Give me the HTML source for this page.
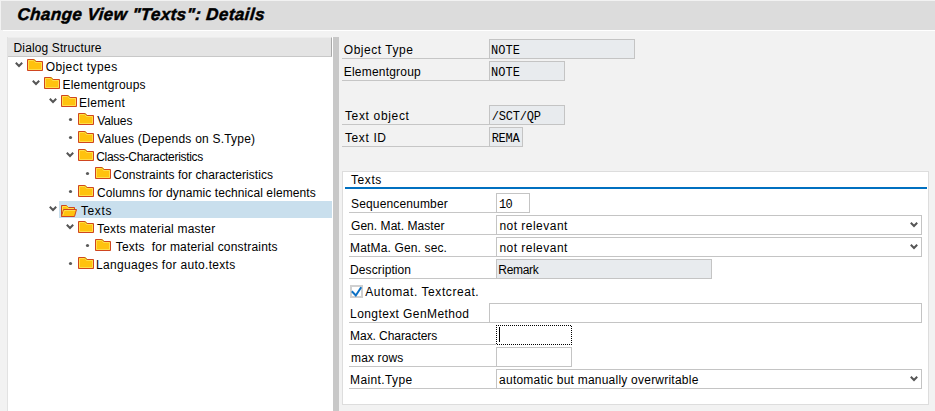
<!DOCTYPE html>
<html><head><meta charset="utf-8">
<style>
*{box-sizing:border-box}
html,body{margin:0;padding:0}
body{width:935px;height:411px;overflow:hidden;position:relative;background:#f2f2f2;font-family:"Liberation Sans",sans-serif;font-size:12px;color:#000}
.a{position:absolute}
.t{position:absolute;white-space:pre;line-height:14px;height:14px;font-size:12px}
.mono{font-family:"Liberation Mono",monospace;font-size:12px}
.title{left:1px;top:1px;width:934px;height:29px;background:#dcdcdc}
.wl{left:3px;top:30px;width:932px;height:1px;background:#fff}
.ttxt{position:absolute;left:16px;top:4px;font-size:17px;font-weight:bold;font-style:italic;white-space:pre;line-height:20px;letter-spacing:0.41px;-webkit-text-stroke:0.5px #000;transform:skewX(-5deg);transform-origin:0 16px}
.hdr{left:8px;top:37px;width:324px;height:20px;background:#e4e4e4;border-top:1px solid #ececec;border-bottom:1px solid #c8c8c8;border-right:1px solid #a9a9a9}
.tree{left:7px;top:37px;width:326px;height:374px;background:#fff;border-left:1px solid #e2e2e2}
.split{left:333px;top:37px;width:6px;height:374px;background:#c8c8c8}
.sel{left:59px;top:201px;width:273px;height:17px;background:#c9dfed}
.lbl{position:absolute;height:20px;border-bottom:1px solid #c6c6c6}
.ro{position:absolute;height:20px;background:#e8ebee;border:1px solid #c4c4c4}
.inp{position:absolute;height:20px;background:#fff;border:1px solid #c4c4c4}
.grp{left:342px;top:171px;width:587px;height:234px;background:#fff;border:1px solid #dddddd}
.blue{left:345px;top:187px;width:582px;height:2px;background:#0070c0}
</style></head>
<body>
<div class="a title"><span class="ttxt">Change View "Texts": Details</span></div>
<div class="a wl"></div>
<div class="a tree"></div>
<div class="a hdr"></div>
<div class="a split"></div>
<div class="a sel"></div>
<svg class="a" style="left:0;top:0" width="340" height="411">
<defs>
<g id="f">
<path d="M0.5 11.5 V0.5 H7 L9 2.5 H15.5 V11.5 Z" fill="#ffc20e" stroke="#cf4520" stroke-width="1" stroke-linejoin="round"/>
<path d="M1.5 10.5 V1.5 H6.5 L8.5 3.5 H14.5 V10.5 Z" fill="none" stroke="#ffde4a" stroke-width="1"/>
<path d="M6.8 0.5 L9 2.7" fill="none" stroke="#d8a31a" stroke-width="1.2"/>
</g>
<g id="c"><path d="M0.8 0.8 L4 4 L7.2 0.8" fill="none" stroke="#555" stroke-width="2"/></g>
</defs>
<use href="#c" x="15" y="62"/><use href="#f" x="27" y="59"/>
<use href="#c" x="32" y="80"/><use href="#f" x="44" y="77"/>
<use href="#c" x="49" y="98"/><use href="#f" x="61" y="95"/>
<circle cx="70.5" cy="119.5" r="1.6" fill="#5a5a5a"/><use href="#f" x="78" y="113"/>
<circle cx="70.5" cy="137.5" r="1.6" fill="#5a5a5a"/><use href="#f" x="78" y="131"/>
<use href="#c" x="66" y="152"/><use href="#f" x="78" y="149"/>
<circle cx="87.5" cy="173.5" r="1.6" fill="#5a5a5a"/><use href="#f" x="95" y="167"/>
<circle cx="70.5" cy="191.5" r="1.6" fill="#5a5a5a"/><use href="#f" x="78" y="185"/>
<use href="#c" x="49" y="206"/>
<g transform="translate(61,205)">
<path d="M0.5 11.5 V0.5 H5.5 L7.5 2.5 H13.5 V4.5" fill="#ffc20e" stroke="#cf4520" stroke-linejoin="round"/>
<path d="M1.5 10 V1.5 H5 L7 3.5 H12.5 V4.5" fill="none" stroke="#ffde4a"/>
<path d="M5.5 0.5 L7.5 2.5" fill="none" stroke="#d8a31a"/>
<path d="M0.5 11.5 L2.5 4.5 H15.5 L13.5 11.5 Z" fill="#ffc20e" stroke="#cf4520" stroke-linejoin="round"/>
<path d="M1.8 10.5 L3.3 5.5 H14.2" fill="none" stroke="#ffde4a"/>
</g>
<use href="#c" x="66" y="224"/><use href="#f" x="78" y="221"/>
<circle cx="87.5" cy="245.5" r="1.6" fill="#5a5a5a"/><use href="#f" x="95" y="239"/>
<circle cx="70.5" cy="263.5" r="1.6" fill="#5a5a5a"/><use href="#f" x="78" y="257"/>
</svg>
<div class="lbl" style="left:342px;top:39px;width:147px"></div>
<div class="ro" style="left:489px;top:39px;width:146px"></div>
<div class="lbl" style="left:342px;top:61px;width:147px"></div>
<div class="ro" style="left:489px;top:61px;width:76px"></div>
<div class="lbl" style="left:342px;top:105px;width:147px"></div>
<div class="ro" style="left:489px;top:105px;width:76px"></div>
<div class="lbl" style="left:342px;top:127px;width:147px"></div>
<div class="ro" style="left:489px;top:127px;width:34px"></div>
<div class="a grp"></div>
<div class="a blue"></div>
<div class="lbl" style="left:349px;top:193px;width:147px"></div>
<div class="inp" style="left:496px;top:193px;width:34px"></div>
<div class="lbl" style="left:349px;top:215px;width:147px"></div>
<div class="inp" style="left:496px;top:215px;width:426px"></div>
<div class="lbl" style="left:349px;top:237px;width:147px"></div>
<div class="inp" style="left:496px;top:237px;width:426px"></div>
<div class="lbl" style="left:349px;top:259px;width:147px"></div>
<div class="ro" style="left:496px;top:259px;width:216px"></div>
<div class="lbl" style="left:349px;top:303px;width:140px"></div>
<div class="inp" style="left:489px;top:303px;width:433px"></div>
<div class="lbl" style="left:349px;top:325px;width:147px"></div>
<div class="lbl" style="left:349px;top:347px;width:147px"></div>
<div class="inp" style="left:496px;top:347px;width:76px"></div>
<div class="lbl" style="left:349px;top:369px;width:147px"></div>
<div class="inp" style="left:496px;top:369px;width:426px"></div>
<svg class="a" style="left:0;top:0" width="935" height="411">
<defs><g id="c2"><path d="M0.8 0.8 L4 4 L7.2 0.8" fill="none" stroke="#555" stroke-width="2"/></g></defs>
<use href="#c2" x="910" y="222"/>
<use href="#c2" x="910" y="244"/>
<use href="#c2" x="910" y="376"/>
<rect x="351" y="286" width="11" height="11" fill="#fff" stroke="#d0d0d0" stroke-width="2"/>
<path d="M351.8 291.3 L355.8 295.5 L361.2 287.3" fill="none" stroke="#0b70c4" stroke-width="2"/>
<rect x="496.5" y="325.5" width="75" height="19" fill="#fff" stroke="#000" stroke-dasharray="1 1" stroke-dashoffset="0.5" shape-rendering="crispEdges"/>
<rect x="499" y="327" width="1" height="15" fill="#000"/>
</svg>
<span id="t0" class="t" style="left:45.64px;top:60.00px;letter-spacing:0.441px">Object types</span>
<span id="t1" class="t" style="left:62.46px;top:78.00px;letter-spacing:0.195px">Elementgroups</span>
<span id="t2" class="t" style="left:79.10px;top:96.00px;letter-spacing:0.270px">Element</span>
<span id="t3" class="t" style="left:97.18px;top:114.00px;letter-spacing:-0.108px">Values</span>
<span id="t4" class="t" style="left:97.18px;top:132.00px;letter-spacing:0.216px">Values (Depends on S.Type)</span>
<span id="t5" class="t" style="left:96.28px;top:150.00px;letter-spacing:-0.322px">Class-Characteristics</span>
<span id="t6" class="t" style="left:113.28px;top:168.00px;letter-spacing:0.054px">Constraints for characteristics</span>
<span id="t7" class="t" style="left:97.00px;top:186.00px;letter-spacing:0.088px">Columns for dynamic technical elements</span>
<span id="t8" class="t" style="left:80.90px;top:204.00px;letter-spacing:0.632px">Texts</span>
<span id="t9" class="t" style="left:97.00px;top:222.00px;letter-spacing:0.207px">Texts material master</span>
<span id="t10" class="t" style="left:115.80px;top:240.00px;letter-spacing:0.192px">Texts  for material constraints</span>
<span id="t11" class="t" style="left:96.10px;top:258.00px;letter-spacing:0.305px">Languages for auto.texts</span>
<span id="dlg" class="t" style="left:13.55px;top:41.00px;letter-spacing:0.126px">Dialog Structure</span>
<span id="l0" class="t" style="left:343.82px;top:43.00px;letter-spacing:0.522px">Object Type</span>
<span id="l1" class="t" style="left:343.82px;top:65.00px;letter-spacing:0.196px">Elementgroup</span>
<span id="l2" class="t" style="left:344.90px;top:109.00px;letter-spacing:0.666px">Text object</span>
<span id="l3" class="t" style="left:344.90px;top:131.00px;letter-spacing:0.630px">Text ID</span>
<span id="g0" class="t" style="left:351.00px;top:173.00px;letter-spacing:0.585px">Texts</span>
<span id="g1" class="t" style="left:351.00px;top:197.00px;letter-spacing:0.153px">Sequencenumber</span>
<span id="g2" class="t" style="left:351.00px;top:219.00px;letter-spacing:0.048px">Gen. Mat. Master</span>
<span id="g3" class="t" style="left:350.10px;top:241.00px;letter-spacing:0.144px">MatMa. Gen. sec.</span>
<span id="g4" class="t" style="left:350.10px;top:263.00px;letter-spacing:0.090px">Description</span>
<span id="g5" class="t" style="left:365.28px;top:285.00px;letter-spacing:0.570px">Automat. Textcreat.</span>
<span id="g6" class="t" style="left:350.10px;top:307.00px;letter-spacing:0.403px">Longtext GenMethod</span>
<span id="g7" class="t" style="left:350.10px;top:329.00px;letter-spacing:-0.064px">Max. Characters</span>
<span id="g8" class="t" style="left:351.00px;top:351.00px;letter-spacing:0.129px">max rows</span>
<span id="g9" class="t" style="left:350.10px;top:373.00px;letter-spacing:0.380px">Maint.Type</span>
<span id="v0" class="t" style="left:499.46px;top:219.00px;letter-spacing:0.474px">not relevant</span>
<span id="v1" class="t" style="left:499.46px;top:241.00px;letter-spacing:0.474px">not relevant</span>
<span id="v2" class="t" style="left:498.28px;top:263.00px;letter-spacing:-0.288px">Remark</span>
<span id="v3" class="t" style="left:499.10px;top:373.00px;letter-spacing:0.229px">automatic but manually overwritable</span>
<span id="m0" class="t mono" style="left:490.92px;top:43.50px;letter-spacing:0.060px">NOTE</span>
<span id="m1" class="t mono" style="left:490.92px;top:65.50px;letter-spacing:0.060px">NOTE</span>
<span id="m2" class="t mono" style="left:491.64px;top:109.50px;letter-spacing:-0.180px">/SCT/QP</span>
<span id="m3" class="t mono" style="left:491.64px;top:131.50px;letter-spacing:-0.240px">REMA</span>
<span id="m4" class="t mono" style="left:499.10px;top:197.50px;letter-spacing:-0.720px">10</span>

</body></html>
